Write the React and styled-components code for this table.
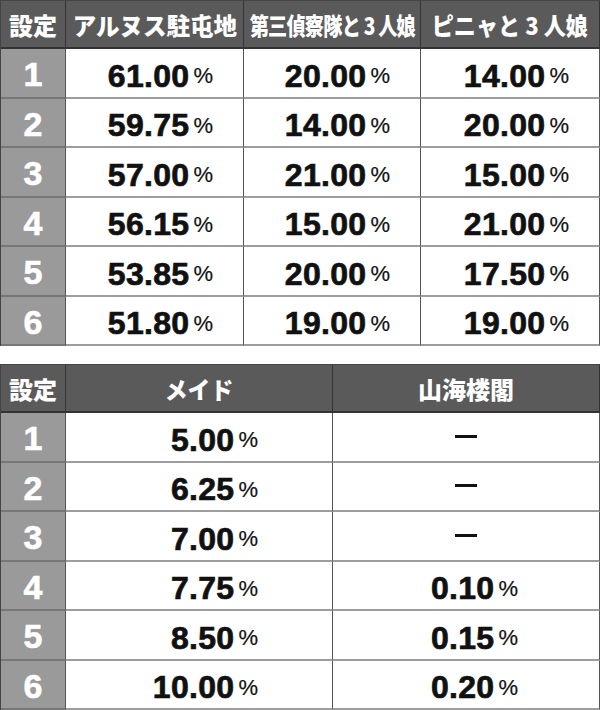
import React from 'react'
import styled, { createGlobalStyle } from 'styled-components'

const GlobalStyle = createGlobalStyle`
  body {
    margin: 0;
    background: #fff;
  }
`

const Page = styled.div`
  width: 600px;
  display: flex;
  flex-direction: column;
  gap: 18px;
`

const Grid = styled.div`
  display: grid;
  grid-template-columns: ${(p) => p.$cols};
  grid-template-rows: 48px repeat(6, 1fr);
  width: 600px;
  height: 346px;
  box-sizing: border-box;
  border-left: 1px solid #444;
  border-top: 1px solid #444;
`

const Head = styled.div`
  display: flex;
  align-items: center;
  justify-content: center;
  background: #5a5a5a;
  color: #fff;
  font-family: "Noto Sans CJK JP", sans-serif;
  font-weight: 900;
  font-size: 24px;
  white-space: nowrap;
  border-right: 1px solid #333;
  border-bottom: 2px solid #333;
  overflow: hidden;
`

const HeadText = styled.span`
  display: inline-block;
  letter-spacing: ${(p) => p.$spacing || 0}px;
  transform: scaleX(${(p) => p.$scale || 1});
`

const Setting = styled.div`
  display: flex;
  align-items: center;
  justify-content: center;
  padding-top: 4px;
  background: #9a9a9a;
  color: #fff;
  font-family: "Liberation Sans", Arial, sans-serif;
  font-weight: 700;
  font-size: 34px;
  -webkit-text-stroke: 0.6px #fff;
  border-right: 1px solid #555;
  border-bottom: 2px solid #777;
`

const Value = styled.div`
  display: flex;
  align-items: center;
  justify-content: ${(p) => (p.$center ? 'center' : 'flex-end')};
  padding-right: ${(p) => (p.$center ? 0 : p.$pad)}px;
  padding-top: 7px;
  box-sizing: border-box;
  color: #111;
  font-family: "Liberation Sans", Arial, sans-serif;
  font-weight: 700;
  font-size: 32px;
  letter-spacing: 0.3px;
  -webkit-text-stroke: 0.7px #111;
  border-right: 1px solid #555;
  border-bottom: 2px solid #9d9d9d;
`

const Pct = styled.span`
  font-weight: 400;
  font-size: 22px;
  margin-left: 4px;
  letter-spacing: 0;
  -webkit-text-stroke: 0.2px #111;
`

const Dash = styled.span`
  display: block;
  width: 22px;
  height: 3px;
  background: #111;
  margin-top: -8px;
`

const table1 = [
  ['61.00', '20.00', '14.00'],
  ['59.75', '14.00', '20.00'],
  ['57.00', '21.00', '15.00'],
  ['56.15', '15.00', '21.00'],
  ['53.85', '20.00', '17.50'],
  ['51.80', '19.00', '19.00'],
]

const table2 = [
  ['5.00', null],
  ['6.25', null],
  ['7.00', null],
  ['7.75', '0.10'],
  ['8.50', '0.15'],
  ['10.00', '0.20'],
]

function Cell({ value, pad }) {
  if (value === null) {
    return (
      <Value $center>
        <Dash />
      </Value>
    )
  }
  return (
    <Value $pad={pad}>
      {value}
      <Pct>%</Pct>
    </Value>
  )
}

export default function App() {
  return (
    <Page>
      <GlobalStyle />
      <Grid $cols="65px 178px 177px 1fr">
        <Head><HeadText>設定</HeadText></Head>
        <Head><HeadText $scale={0.98}>アルヌス駐屯地</HeadText></Head>
        <Head><HeadText $scale={0.8} $spacing={-1}>第三偵察隊と 3 人娘</HeadText></Head>
        <Head><HeadText $scale={0.92}>ピニャと 3 人娘</HeadText></Head>
        {table1.map((row, i) => (
          <React.Fragment key={i}>
            <Setting>{i + 1}</Setting>
            {row.map((v, j) => (
              <Cell key={j} value={v} pad={30} />
            ))}
          </React.Fragment>
        ))}
      </Grid>
      <Grid $cols="65px 267px 1fr">
        <Head><HeadText>設定</HeadText></Head>
        <Head><HeadText $scale={0.95}>メイド</HeadText></Head>
        <Head><HeadText>山海楼閣</HeadText></Head>
        {table2.map((row, i) => (
          <React.Fragment key={i}>
            <Setting>{i + 1}</Setting>
            <Cell value={row[0]} pad={74} />
            <Cell value={row[1]} pad={81} />
          </React.Fragment>
        ))}
      </Grid>
    </Page>
  )
}
